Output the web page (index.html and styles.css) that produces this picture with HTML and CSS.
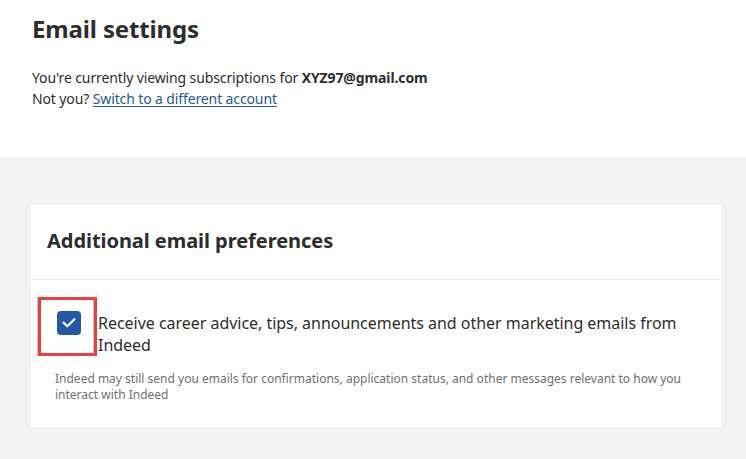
FILE: index.html
```html
<!DOCTYPE html>
<html lang="en">
<head>
<meta charset="utf-8">
<title>Email settings</title>
<link rel="stylesheet" href="styles.css">
</head>
<body>
  <header class="intro">
    <h1 class="title">Email settings</h1>
    <p class="account">You're currently viewing subscriptions for <strong>XYZ97@gmail.com</strong><br>Not you? <a href="#" class="link">Switch to a different account</a></p>
  </header>
  <main class="content">
    <section class="card">
      <div class="card-head">
        <h2 class="card-title">Additional email preferences</h2>
      </div>
      <div class="card-body">
        <label class="option">
          <span class="check-wrap">
            <span class="checkbox">
              <svg width="24" height="24" viewBox="0 0 24 24" aria-hidden="true"><path d="M6.5 11.6 L10.3 15.2 L17.4 8.2" fill="none" stroke="#fff" stroke-width="2.2" stroke-linecap="round" stroke-linejoin="round"/></svg>
            </span>
          </span>
          <span class="option-text">Receive career advice, tips, announcements and other marketing emails from Indeed</span>
        </label>
        <p class="note">Indeed may still send you emails for confirmations, application status, and other messages relevant to how you interact with Indeed</p>
      </div>
    </section>
  </main>
</body>
</html>
```
FILE: styles.css
```css
html, body {
  margin: 0;
  padding: 0;
  background: #f2f2f2;
}
body {
  font-family: "Noto Sans", "Open Sans", sans-serif;
  color: #2d2d2d;
  height: 459px;
  overflow: hidden;
}
.intro {
  background: #fff;
  padding: 13px 32px 48px;
}
.title {
  margin: 0;
  font-size: 24px;
  line-height: 32px;
  font-weight: 700;
  letter-spacing: -0.15px;
}
.account {
  margin: 22px 0 0;
  font-size: 14px;
  line-height: 21px;
  letter-spacing: -0.12px;
}
.account strong {
  font-weight: 700;
}
.link {
  color: #2557a7;
  text-decoration: underline;
  text-underline-offset: 2px;
}
.content {
  padding: 48px 25px 32px 31px;
}
.card {
  background: #fff;
}
.card-head {
  padding: 24px 16px 26px;
  border-bottom: 1px solid #ececec;
}
.card-title {
  margin: 0;
  font-size: 20px;
  line-height: 24px;
  font-weight: 700;
  letter-spacing: -0.05px;
}
.card-body {
  padding: 17px 16px 24px 7px;
}
.option {
  display: flex;
  align-items: flex-start;
}
.check-wrap {
  flex: none;
  width: 53px;
  height: 53px;
  border: 3px solid #ee3f3f;
  box-sizing: content-box;
  box-shadow: -1px 0 0 #c9c9c9, inset -1px 0 0 #c9c9c9;
  display: flex;
  align-items: flex-start;
  padding: 0;
}
.checkbox {
  width: 24px;
  height: 24px;
  margin: 11px 0 0 16px;
  border-radius: 4px;
  background: #2557a7;
  display: flex;
}
.option-text {
  margin-top: 15px;
  font-size: 16px;
  line-height: 22px;
  padding-left: 1px;
  letter-spacing: -0.03px;
}
.note {
  margin: 15px 0 0 17px;
  font-size: 12px;
  line-height: 16px;
  color: #6f6f6f;
}
```
